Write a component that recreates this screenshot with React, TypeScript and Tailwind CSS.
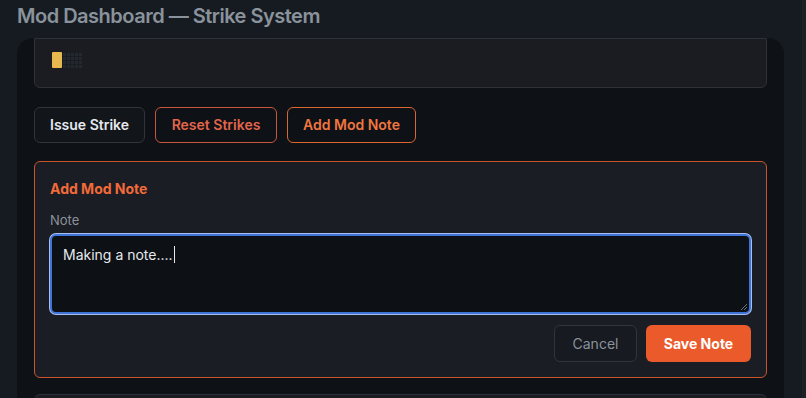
import React from 'react';

const font = { fontFamily: 'Inter, "Noto Sans", sans-serif' };

const StrikeMeter: React.FC = () => (
  <div className="flex items-center">
    <div className="h-4 w-[10px] rounded-[1px] bg-[#e8b94f]" />
    <div className="grid grid-cols-5 gap-px ml-[1px]">
      {Array.from({ length: 20 }).map((_, i) => (
        <div key={i} className="h-[3px] w-[3px] bg-[#23272e]" />
      ))}
    </div>
  </div>
);

const NotePanel: React.FC = () => (
  <section className="mt-[18px] rounded-md border border-[#c9552d] bg-[#1a1d23] p-[15px] pt-4 pb-[15px]">
    <h3 className="text-sm font-bold leading-[22px] text-[#f26a3a]">Add Mod Note</h3>
    <label className="mt-[12px] block text-[13px] leading-4 text-[#8b929b]">Note</label>
    <div className="relative mt-[6px] h-20 rounded-md border-2 border-[#3f74d6] bg-[#0d1014] px-[11px] py-[6px] shadow-[0_0_0_1px_#a6bfee]">
      <span className="text-sm leading-5 text-[#e6e9ee]">Making a note....</span>
      <span className="ml-px inline-block h-[17px] w-px translate-y-[3px] bg-[#e6e9ee]" />
      <svg className="absolute bottom-[1px] right-[1px]" width="9" height="9" viewBox="0 0 9 9">
        <path d="M8 2 L2 8 M8 5 L5 8" stroke="#6b7280" strokeWidth="1" />
      </svg>
    </div>
    <div className="mt-[11px] flex justify-end gap-[9px]">
      <button className="h-[37px] w-[83px] rounded-md border border-[#30353d] bg-[#171a20] text-sm text-[#8b929b]">
        Cancel
      </button>
      <button className="h-[37px] w-[105px] rounded-md bg-[#ea5a2a] text-sm font-bold text-white">
        Save Note
      </button>
    </div>
  </section>
);

export default function App() {
  return (
    <div className="flex h-[398px] w-[806px] overflow-hidden bg-[#161b21]" style={font}>
      <div className="w-[802px]">
        <h1 className="pl-[17px] pt-[3px] text-[20px] font-semibold leading-[26px] tracking-tight text-[#8a939c]">
          Mod Dashboard — Strike System
        </h1>
        <div className="mt-[9px] ml-[17px] w-[767px] h-[400px] overflow-hidden rounded-t-2xl bg-[#0e1115] px-[17px]">
          <div className="flex h-[50px] items-start rounded-b-md border border-[#2d3138] bg-[#1a1c22] pl-[17px] pt-[13px]">
            <StrikeMeter />
          </div>
          <div className="mt-[19px] flex gap-[10px]">
            <button className="h-9 w-[111px] rounded-md border border-[#30353d] bg-[#12151a] text-sm font-semibold text-[#e6e9ee]">
              Issue Strike
            </button>
            <button className="h-9 w-[122px] rounded-md border border-[#c8553d] text-sm font-semibold text-[#e2654c]">
              Reset Strikes
            </button>
            <button className="h-9 w-[129px] rounded-md border border-[#d9672f] text-sm font-semibold text-[#f07640]">
              Add Mod Note
            </button>
          </div>
          <NotePanel />
          <div className="mt-4 h-12 rounded-md border border-[#2d3138] bg-[#1a1c22]" />
        </div>
      </div>
      <div className="w-1 bg-[#1b2027]" />
    </div>
  );
}
